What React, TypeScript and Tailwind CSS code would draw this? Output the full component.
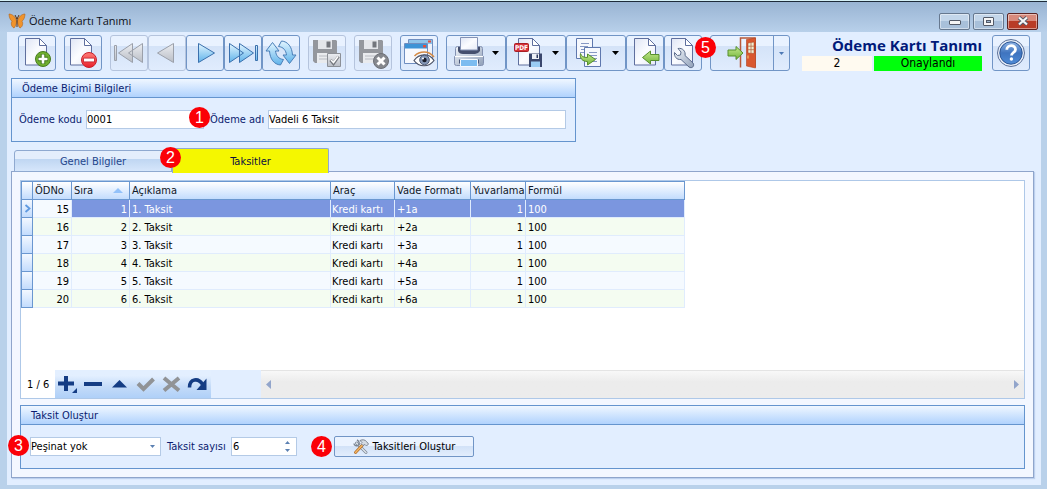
import { useState } from "react";
import type { ReactNode } from "react";
import clsx from "clsx";

type Row = {
  no: number;
  order: number;
  title: string;
  method: string;
  due: string;
  rounding: number;
  formula: string;
};

const rows: Row[] = [1, 2, 3, 4, 5, 6].map((n) => ({
  no: 14 + n,
  order: n,
  title: `${n}. Taksit`,
  method: "Kredi kartı",
  due: `+${n}a`,
  rounding: 1,
  formula: "100",
}));

const headCell =
  "h-[19px] overflow-hidden border-y border-r border-[#6a97d0] bg-linear-to-b from-white to-[#c3dcfd] px-0.5 text-left font-normal whitespace-nowrap text-[#101828]";

function Badge({ n, className }: { n: number; className: string }) {
  return (
    <span
      className={clsx(
        "absolute z-10 flex size-[21px] items-center justify-center rounded-full bg-[#fb0007] font-['Liberation_Sans',sans-serif] text-base leading-none text-white",
        className,
      )}
    >
      {n}
    </span>
  );
}

function Caret({ className }: { className: string }) {
  return (
    <svg viewBox="0 0 7 4" className={clsx("h-1 w-[7px] shrink-0", className)} fill="currentColor">
      <path d="M0 0h7L3.500 4z" />
    </svg>
  );
}

/* Shared gradients for the toolbar drawings */
function Defs() {
  return (
    <svg className="absolute size-0" aria-hidden="true">
      <defs>
        <linearGradient id="paper" x1="0" y1="0" x2="1" y2="1">
          <stop offset="0" stopColor="#dfe5f5" />
          <stop offset=".5" stopColor="#fbfcff" />
          <stop offset="1" stopColor="#e6eaf6" />
        </linearGradient>
        <linearGradient id="green" x1="0" y1="0" x2="0" y2="1">
          <stop offset="0" stopColor="#c4e88c" />
          <stop offset="1" stopColor="#72b53a" />
        </linearGradient>
        <linearGradient id="red" x1="0" y1="0" x2="0" y2="1">
          <stop offset="0" stopColor="#ff7d78" />
          <stop offset="1" stopColor="#e8202a" />
        </linearGradient>
        <linearGradient id="blue" x1="0" y1="0" x2="0" y2="1">
          <stop offset="0" stopColor="#e2f5ff" />
          <stop offset="1" stopColor="#5eb2ea" />
        </linearGradient>
        <linearGradient id="gray" x1="0" y1="0" x2="0" y2="1">
          <stop offset="0" stopColor="#eceef2" />
          <stop offset="1" stopColor="#b9bdc5" />
        </linearGradient>
        <linearGradient id="steel" x1="0" y1="0" x2="1" y2="1">
          <stop offset="0" stopColor="#f2f6fb" />
          <stop offset="1" stopColor="#8f9fb8" />
        </linearGradient>
        <linearGradient id="help" x1="0" y1="0" x2="0" y2="1">
          <stop offset="0" stopColor="#8fb4e6" />
          <stop offset=".5" stopColor="#3f74bf" />
          <stop offset="1" stopColor="#4e8bd6" />
        </linearGradient>
      </defs>
    </svg>
  );
}

function Icon({ children, wide }: { children: ReactNode; wide?: boolean }) {
  return (
    <svg
      viewBox={wide ? "0 0 40 34" : "0 0 36 34"}
      className={clsx("h-[34px] shrink-0", wide ? "w-10" : "w-9")}
      fill="none"
      aria-hidden="true"
    >
      {children}
    </svg>
  );
}

function Page({ x = 6 }: { x?: number }) {
  return (
    <g transform={`translate(${x} 2)`} stroke="#5f6f9e" strokeLinejoin="round">
      <path d="M.5.5h14l7 7v19.500h-21z" fill="url(#paper)" />
      <path d="M14.500.5v7h7z" fill="#fff" />
    </g>
  );
}

/* Greyed-out disk behind the save and cancel marks */
function Floppy() {
  return (
    <g>
      <path d="M4 4h23l1 1v22H6l-2-2z" fill="#94979d" />
      <path d="M9 4h14v9H9z" fill="#e4e6ea" />
      <path d="M17.500 5.500h4v6h-4z" fill="#73767c" />
      <path d="M8 17h16v10H8z" fill="#e9ebee" />
      <path d="M10 20h12M10 23h12" stroke="#b8bbc2" />
    </g>
  );
}

function GreenArrow({ d }: { d: string }) {
  return <path d={d} fill="url(#green)" stroke="#568f2c" strokeLinejoin="round" />;
}

type ToolProps = {
  label: string;
  disabled?: boolean;
  menu?: boolean;
  children: ReactNode;
};

function Tool({ label, disabled, menu, children }: ToolProps) {
  return (
    <button
      type="button"
      aria-label={label}
      disabled={disabled}
      className={clsx(
        "flex h-9 shrink-0 items-center rounded-[3px] border bg-linear-to-b from-[#e9f2ff] from-30% via-[#d4e3f8] via-30% to-[#e0ecfd]",
        menu ? "w-[60px]" : "w-[38px]",
        disabled ? "border-[#b5c4dd]" : "border-[#7195c6]",
      )}
    >
      {children}
      {menu && <Caret className="ml-[5px] text-black" />}
    </button>
  );
}

function TitleBar() {
  const btn =
    "flex h-[17px] w-[31px] items-center justify-center rounded-[2px] border shadow-[inset_0_0_0_1px_rgba(255,255,255,.45)]";
  return (
    <header className="flex h-[30px] items-center bg-linear-to-b from-[#99b4d3] to-[#b8d0ea] pt-2 pr-[9px] pl-2">
      <svg viewBox="0 0 18 16" className="h-4 w-[18px]" aria-hidden="true">
        <g fill="#f0932b" stroke="#b0651f" strokeWidth=".6">
          <path d="M8.500 8C7.500 3.500 4 1 1 1c.2 3 .8 5.500 3 7.200C2.500 10 3.500 14 6 15c1.500-1.500 2.500-4 2.500-7z" />
          <path d="M9.500 8C10.500 3.500 14 1 17 1c-.2 3-.8 5.500-3 7.200 1.500 1.800.5 5.800-2 6.800-1.500-1.500-2.500-4-2.500-7z" />
        </g>
        <path d="M9 5v9M7 2l2 4 2-4" stroke="#5a3416" fill="none" />
      </svg>
      <h1 className="ml-[3px] font-['Open_Sans','Noto_Sans',sans-serif] text-[11px] leading-4 text-[#0b0f16]">
        Ödeme Kartı Tanımı
      </h1>
      <div className="ml-auto flex gap-[3px]">
        <button type="button" aria-label="Küçült" className={clsx(btn, "border-[#66788f] bg-linear-to-b from-[#c3d6ea] from-50% to-[#a8c0da] to-50%")}>
          <svg viewBox="0 0 12 10" className="h-2.5 w-3">
            <rect x=".5" y="4.500" width="11" height="4" rx=".5" fill="#f5f5f5" stroke="#535a68" />
          </svg>
        </button>
        <button type="button" aria-label="Ekranı kapla" className={clsx(btn, "border-[#66788f] bg-linear-to-b from-[#c3d6ea] from-50% to-[#a8c0da] to-50%")}>
          <svg viewBox="0 0 11 9" className="h-[9px] w-[11px]">
            <rect x=".5" y=".5" width="10" height="8" rx=".5" fill="#f5f5f5" stroke="#535a68" />
            <rect x="3.500" y="3.500" width="4" height="2" fill="#9fb6cf" stroke="#535a68" />
          </svg>
        </button>
        <button type="button" aria-label="Kapat" className={clsx(btn, "border-[#5b2322] bg-linear-to-b from-[#d88a7c] from-50% to-[#b83c27] to-50%")}>
          <svg viewBox="0 0 12 10" className="h-2.5 w-3">
            <path d="M2 1.500l8 7m0-7l-8 7" stroke="#535a68" strokeWidth="4" />
            <path d="M2 1.500l8 7m0-7l-8 7" stroke="#f7f7f7" strokeWidth="2.200" />
          </svg>
        </button>
      </div>
    </header>
  );
}

function Toolbar() {
  return (
    <div className="flex items-start gap-2 pt-[3px] pr-[11px] pl-[11px]">
      <Tool label="Yeni">
        <Icon>
          <Page />
          <circle cx="24" cy="23" r="7.500" fill="#6fae2f" stroke="#477d1f" />
          <path d="M24 18v10M19 23h10" stroke="#3f7419" strokeWidth="4.500" />
          <path d="M24 18.500v9M19.500 23h9" stroke="#fff" strokeWidth="2.600" />
        </Icon>
      </Tool>
      <Tool label="Sil">
        <Icon>
          <Page x={5} />
          <circle cx="24" cy="24" r="7.500" fill="url(#red)" stroke="#c8202a" />
          <path d="M18.500 24h11" stroke="#b81722" strokeWidth="4.500" />
          <path d="M19 24h10" stroke="#fff" strokeWidth="3" />
        </Icon>
      </Tool>
      <div className="flex">
        <Tool label="İlk kayıt" disabled>
          <Icon>
            <g fill="url(#gray)" stroke="#9ba0aa" strokeLinejoin="round">
              <path d="M3.500 9.500h2v15h-2zM21.500 7.500v19l-14-9.500zM31.500 7.500v19l-14-9.500z" />
            </g>
          </Icon>
        </Tool>
        <Tool label="Önceki kayıt" disabled>
          <Icon>
            <path d="M24.500 7.500v19l-16-9.500z" fill="url(#gray)" stroke="#9ba0aa" strokeLinejoin="round" />
          </Icon>
        </Tool>
        <Tool label="Sonraki kayıt">
          <Icon>
            <path d="M11.500 7.500v19l16-9.500z" fill="url(#blue)" stroke="#3a70ad" strokeLinejoin="round" />
          </Icon>
        </Tool>
        <Tool label="Son kayıt">
          <Icon>
            <g fill="url(#blue)" stroke="#3a70ad" strokeLinejoin="round">
              <path d="M4.500 7.500v19l14-9.500zM14.500 7.500v19l14-9.500zM30.500 9.500h2v15h-2z" />
            </g>
          </Icon>
        </Tool>
        <Tool label="Yenile">
          <Icon>
            <g fill="url(#blue)" stroke="#4a7fb8" strokeLinejoin="round">
              <path d="M9.500 6.500l6.500 8.500h-3.500c.5 4.500 3 8 8 8.500l-3 5.500C11 28.500 7 23 6.500 15H3z" />
              <path d="M26.500 27.500L20 19h3.500c-.5-4.500-3-8-8-8.500l3-5.500C25 5.500 29 11 29.500 19H33z" />
            </g>
          </Icon>
        </Tool>
      </div>
      <Tool label="Kaydet" disabled>
        <Icon>
          <Floppy />
          <path d="M18.500 17.500h13v13h-13z" fill="url(#gray)" stroke="#8c9097" />
          <path d="M21.500 24l3 3.500 5-7" stroke="#75787e" strokeWidth="3" />
          <path d="M22 24l2.500 2.500 4.500-6" stroke="#fff" strokeWidth="1.500" />
        </Icon>
      </Tool>
      <Tool label="Vazgeç" disabled>
        <Icon>
          <Floppy />
          <circle cx="26" cy="25" r="7.500" fill="#85888e" stroke="#6d7077" />
          <path d="M22.500 21.500l7 7m0-7l-7 7" stroke="#fff" strokeWidth="3" />
        </Icon>
      </Tool>
      <Tool label="Görünüm">
        <Icon>
          <path d="M7.500 3.500h24v18h-24z" fill="#eef3fc" stroke="#6f8ec0" />
          <path d="M8 4h23v4H8z" fill="#8fc4ea" />
          <path d="M27 4.500h3v2h-3z" fill="#e2503e" />
          <path d="M3.500 7.500h23v20h-23z" fill="#f7f9fe" stroke="#6f8ec0" />
          <path d="M4 8h22v4.500H4z" fill="#3d93d6" />
          <path d="M22 9h3v2.500h-3z" fill="#e2503e" />
          <path d="M13 24.500c5-7 15-8 20 0-5 7-15 7-20 0z" fill="#fff" stroke="#4b5266" strokeWidth="1.200" />
          <path d="M13.500 20c5-5 14-6 19.500 1" stroke="#d58b45" strokeWidth="1.500" />
          <circle cx="23.500" cy="24" r="4.800" fill="#8296b6" stroke="#4d5b78" />
          <circle cx="23.500" cy="24" r="2.200" fill="#171c2a" />
          <circle cx="22" cy="22.500" r="1" fill="#fff" />
        </Icon>
      </Tool>
      <div className="relative flex">
        <Tool label="Yazdır" menu>
          <Icon wide>
            <path d="M8.500 12.500q0-2 2-2h23q2 0 2 2v7l1 1v7q0 2-2 2h-25q-2 0-2-2v-7l1-1z" fill="url(#steel)" stroke="#8492b2" />
            <path d="M11 11h22v4q-2 3-5 3H16q-4 0-5-3z" fill="#454f6d" />
            <path d="M13.500 1.500h17v12.500h-17z" fill="url(#paper)" stroke="#8492b4" />
            <path d="M8 20.500h28" stroke="#fff" />
            <path d="M12 23.500h20v4H12z" fill="#4a587a" />
            <path d="M13.500 23.500h17v7h-17z" fill="#7cbcf0" stroke="#f4f9ff" />
          </Icon>
        </Tool>
        <Tool label="PDF kaydet" menu>
          <Icon wide>
            <Page x={11} />
            <rect x="7.500" y="7.500" width="14" height="8" rx="1" fill="#d8343a" stroke="#a81e25" />
            <text x="14.500" y="14.200" textAnchor="middle" fontSize="6.500" fontWeight="700" fontFamily="DejaVu Sans Condensed, sans-serif" fill="#fff">
              PDF
            </text>
            <path d="M22 17.500h13V31H22z" fill="#3a476d" />
            <path d="M25 18h7v5h-7z" fill="#eef1f7" />
            <path d="M29.500 18.500h1.500V22h-1.500z" fill="#2e3b61" />
            <path d="M24 25.500h9V31h-9z" fill="#9accf4" />
          </Icon>
        </Tool>
        <Tool label="Kopyala" menu>
          <Icon wide>
            <path d="M9.500 2.500h16v20h-16z" fill="#f6f8fd" stroke="#5f78ae" />
            <path d="M14 7.500h8M13 10.500h8M14 13.500h8M13 16.500h8" stroke="#8698c4" />
            <path d="M17.500 11.500h16v19h-16z" fill="#f6f8fd" stroke="#5f78ae" />
            <path d="M22 16.500h8M21 19.500h9M22 22.500h8M21 25.500h9" stroke="#8698c4" />
            <GreenArrow d="M13.500 17.500c1 3 3 4 7 4v-3.500l8 5.500-8 5.500V25.500c-5 0-8-3-7-8z" />
          </Icon>
        </Tool>
        <Tool label="İçe aktar">
          <Icon>
            <Page x={7} />
            <GreenArrow d="M15.500 21.500l8-6.500v3.500h8.500v6h-8.500V28z" />
          </Icon>
        </Tool>
        <Tool label="Ayarlar">
          <Icon>
            <Page />
            <path
              d="M13 12.500l3 3.500-.5 3-3 .5-3-3c-.5 4 2 7.500 6.500 7l8 7.500c3 2 6-1 4-4l-8-7.500c1-4-2.500-8-7-7z"
              fill="url(#steel)"
              stroke="#5c6c8c"
              strokeLinejoin="round"
            />
          </Icon>
        </Tool>
        <Badge n={5} className="top-[2px] -right-[14px]" />
      </div>
      <div className="flex h-9 w-20 shrink-0 rounded-[3px] border border-[#7195c6] bg-linear-to-b from-[#e9f2ff] from-30% via-[#d4e3f8] via-30% to-[#e0ecfd]">
        <button type="button" aria-label="Çıkış" className="flex flex-1 justify-center border-r border-[#7195c6]">
          <svg viewBox="0 0 36 34" className="h-[34px] w-9" fill="none" aria-hidden="true">
            <path d="M16.500 31.500V2H31v29" stroke="#b8593a" strokeWidth="1.500" />
            <path d="M22.500 3.500l9-1.500v30l-9-2z" fill="#d9572f" stroke="#b03f1d" strokeWidth=".6" />
            <path d="M24 7l6-1v11.500l-6-.5z" fill="#f1eed2" stroke="#a33a1b" strokeWidth=".5" />
            <path d="M27 6.500V17M24 10.200h6M24 13.700h6" stroke="#b5694a" strokeWidth=".8" />
            <path d="M24 19.500v3" stroke="#f4d27a" />
            <GreenArrow d="M4 14h8v-3.500l7 6.500-7 6.500V20H4z" />
          </svg>
        </button>
        <button type="button" aria-label="Çıkış seçenekleri" className="flex w-[15px] items-center justify-center text-[#4d79b5]">
          <svg viewBox="0 0 5 3" className="h-[3px] w-[5px]" fill="currentColor">
            <path d="M0 0h5L2.500 3z" />
          </svg>
        </button>
      </div>
      <div className="ml-auto flex shrink-0 gap-2.5">
        <div className="w-[180px]">
          <h2 className="h-[18px] text-right font-['Open_Sans','Noto_Sans',sans-serif] text-[15px] leading-5 font-bold whitespace-nowrap text-[#001a7a]">
            Ödeme Kartı Tanımı
          </h2>
          <div className="mt-[3px] flex gap-0.5 text-center text-xs leading-[15px] text-black">
            <span className="h-[15px] w-[70px] bg-[#fffaf0]">2</span>
            <span className="h-[15px] flex-1 bg-[#00ff0c]">Onaylandı</span>
          </div>
        </div>
        <Tool label="Yardım">
          <Icon>
            <circle cx="18" cy="17" r="13.500" fill="#e8eef8" stroke="#5b7098" />
            <circle cx="18" cy="17" r="11.200" fill="url(#help)" stroke="#2d5796" />
            <path d="M13.800 13.800c0-5.500 8.700-5.500 8.700-.4 0 3-4 3.200-4 6" stroke="#fff" strokeWidth="2.800" />
            <circle cx="18.400" cy="23" r="1.700" fill="#fff" />
          </Icon>
        </Tool>
      </div>
    </div>
  );
}

function GroupBox({ title, className, children }: { title: string; className?: string; children: ReactNode }) {
  return (
    <section className={clsx("border border-[#6494ce] bg-[#e2eeff]", className)}>
      <h3 className="h-[19px] border-b border-[#6494ce] bg-linear-to-b from-[#f0f7ff] to-[#b0d2fd] pl-2.5 leading-5">{title}</h3>
      {children}
    </section>
  );
}

function InstallmentTable() {
  const [selected, setSelected] = useState(1);
  return (
    <table className="w-[664px] table-fixed border-separate border-spacing-0 text-black">
      <colgroup>
        <col className="w-3" />
        <col className="w-[39px]" />
        <col className="w-[58px]" />
        <col className="w-[201px]" />
        <col className="w-16" />
        <col className="w-[76px]" />
        <col className="w-[55px]" />
        <col className="w-[159px]" />
      </colgroup>
      <thead>
        <tr>
          <th className={clsx(headCell, "border-l")} aria-label="Seçim" />
          <th className={headCell}>ÖDNo</th>
          <th className={headCell}>
            <span className="flex items-center justify-between pr-1">
              Sıra
              <svg viewBox="0 0 10 5" className="h-[5px] w-2.5" fill="#93c2fa">
                <path d="M0 5h10L5 0z" />
              </svg>
            </span>
          </th>
          <th className={headCell}>Açıklama</th>
          <th className={headCell}>Araç</th>
          <th className={headCell}>Vade Formatı</th>
          <th className={headCell}>Yuvarlama</th>
          <th className={headCell}>Formül</th>
        </tr>
      </thead>
      <tbody>
        {rows.map((r) => {
          const active = r.order === selected;
          const stripe = r.order % 2 ? "bg-[#f5faff]" : "bg-[#f4fcf1]";
          const base = "h-[18px] border-r border-b border-[#e0ecfd] pt-0.5 whitespace-nowrap";
          const cell = clsx(base, active ? "bg-[#7b96df] text-white" : stripe);
          return (
            <tr key={r.no} onClick={() => setSelected(r.order)}>
              <td className="h-[18px] border-x border-b border-[#6a97d0] bg-linear-to-b from-[#f3f8ff] to-[#c3dcfd]">
                {active && (
                  <svg viewBox="0 0 7 9" className="mx-auto h-[9px] w-[7px]" fill="none">
                    <path d="M1.500 1l4 3.500-4 3.500" stroke="#5f9ae0" strokeWidth="1.800" />
                  </svg>
                )}
              </td>
              <td className={clsx(base, stripe, "pr-0.5 text-right")}>{r.no}</td>
              <td className={clsx(cell, "pr-0.5 text-right")}>{r.order}</td>
              <td className={clsx(cell, "pl-0.5")}>{r.title}</td>
              <td className={clsx(cell, "pl-px")}>{r.method}</td>
              <td className={clsx(cell, "pl-0.5")}>{r.due}</td>
              <td className={clsx(cell, "pr-0.5 text-right")}>{r.rounding}</td>
              <td className={clsx(cell, "pl-0.5")}>{r.formula}</td>
            </tr>
          );
        })}
      </tbody>
    </table>
  );
}

const navItems = [
  {
    label: "Ekle",
    draw: (
      <>
        <path d="M1 9.500h16M9 2v15" stroke="#153d84" strokeWidth="4" />
        <path d="M20 14v5h-5z" fill="#153d84" />
      </>
    ),
  },
  { label: "Çıkar", draw: <path d="M1 10h18" stroke="#153d84" strokeWidth="4" /> },
  { label: "Düzenle", draw: <path d="M3 13.500L10.500 6l7.500 7.500z" fill="#153d84" /> },
  { label: "Onayla", draw: <path d="M3 9.500l5.500 5.500L18.500 5" stroke="#919396" strokeWidth="4" /> },
  { label: "İptal", draw: <path d="M3 4l15 12.500M18 4L3 16.500" stroke="#919396" strokeWidth="4" /> },
  {
    label: "Yenile",
    draw: (
      <>
        <path d="M2.500 13.500c0-9 9-10 13-3" stroke="#153d84" strokeWidth="3.500" />
        <path d="M19.500 4.500v11.500h-10z" fill="#153d84" />
      </>
    ),
  },
];

function Navigator() {
  return (
    <div className="flex h-7 items-stretch">
      <span className="w-[34px] pl-1.5 leading-[30px] text-black">1 / 6</span>
      <div className="flex bg-linear-to-b from-[#e3efff] from-20% via-[#c4dbf8] via-60% to-[#afd0f8]">
        {navItems.map((item) => (
          <button key={item.label} type="button" aria-label={item.label} className="flex w-[26px] items-center justify-center">
            <svg viewBox="0 0 22 21" className="h-[21px] w-[22px]" fill="none">
              {item.draw}
            </svg>
          </button>
        ))}
      </div>
      <div className="w-[50px] bg-[#e2eeff]" />
      <div className="flex flex-1 items-center justify-between border-t border-[#e4e4e4] bg-linear-to-b from-[#f8f8f8] to-[#ececec] to-40% px-[5px] text-[#92a5cb]">
        <button type="button" aria-label="Sola kaydır">
          <svg viewBox="0 0 5 9" className="h-[9px] w-[5px]" fill="currentColor">
            <path d="M5 0v9L0 4.500z" />
          </svg>
        </button>
        <button type="button" aria-label="Sağa kaydır">
          <svg viewBox="0 0 5 9" className="h-[9px] w-[5px]" fill="currentColor">
            <path d="M0 0v9l5-4.500z" />
          </svg>
        </button>
      </div>
    </div>
  );
}

function CreateForm() {
  const [count, setCount] = useState(6);
  return (
    <form className="flex h-[43px] items-center pl-[9px]" onSubmit={(e) => e.preventDefault()}>
      <div className="relative flex items-center">
        <Badge n={3} className="-top-0.5 -left-[22px]" />
        <select
          aria-label="Peşinat"
          className="h-[19px] w-[131px] appearance-none border border-[#b4cae6] bg-white text-black"
        >
          <option>Peşinat yok</option>
        </select>
        <svg viewBox="0 0 5 3" className="pointer-events-none absolute right-1.5 h-[3px] w-[5px]" fill="#5b80b2">
          <path d="M0 0h5L2.500 3z" />
        </svg>
      </div>
      <label htmlFor="count" className="ml-1.5 w-16 whitespace-nowrap">
        Taksit sayısı
      </label>
      <div className="flex h-[19px] w-[66px] border border-[#b4cae6] bg-white">
        <input
          id="count"
          inputMode="numeric"
          value={count}
          onChange={(e) => setCount(Number(e.target.value) || 0)}
          className="min-w-0 flex-1 pl-px text-black outline-none"
        />
        <div className="flex w-[18px] flex-col items-center justify-center gap-[5px]">
          <button type="button" aria-label="Artır" onClick={() => setCount(count + 1)}>
            <svg viewBox="0 0 5 3" className="h-[3px] w-[5px]" fill="#5b80b2">
              <path d="M0 3h5L2.500 0z" />
            </svg>
          </button>
          <button type="button" aria-label="Azalt" onClick={() => setCount(Math.max(0, count - 1))}>
            <svg viewBox="0 0 5 3" className="h-[3px] w-[5px]" fill="#5b80b2">
              <path d="M0 0h5L2.500 3z" />
            </svg>
          </button>
        </div>
      </div>
      <div className="relative ml-[37px]">
        <Badge n={4} className="top-0 -left-[23px]" />
        <button
          type="submit"
          className="flex h-[21px] w-[140px] items-center justify-center gap-1 rounded-[2px] border border-[#7195c6] bg-linear-to-b from-[#ebf3ff] from-45% via-[#d1e1f7] via-45% to-[#e2edfd] whitespace-nowrap text-black"
        >
          <svg viewBox="0 0 16 15" className="h-[15px] w-4" fill="none" aria-hidden="true">
            <path d="M3.500 4l9.500 9.500" stroke="#7a8492" strokeWidth="2.800" strokeLinecap="round" />
            <path d="M3.500 4l9.500 9.500" stroke="#dfe5ec" strokeWidth="1.400" strokeLinecap="round" />
            <path d="M1 4.500c0 2 3 3 4.500 1.500S6 2 4 1" stroke="#7a8492" strokeWidth="1.400" />
            <path d="M9.500 6l-7 7.500" stroke="#b06a25" strokeWidth="2.800" strokeLinecap="round" />
            <path d="M9.500 6l-7 7.500" stroke="#f5b765" strokeWidth="1.400" strokeLinecap="round" />
            <path d="M7 1.500c2.500-1.200 5-.8 6.500 1l2 2.500-2 2-1.500-1.500-2 1-2-2 1-1z" fill="#d5dbe3" stroke="#7a8492" />
          </svg>
          Taksitleri Oluştur
        </button>
      </div>
    </form>
  );
}

export default function App() {
  return (
    <div className="flex min-h-screen flex-col border-t border-[#d5f0f6] bg-[#b9d1ea] font-['DejaVu_Sans_Condensed','Noto_Sans',sans-serif] text-[11px] leading-[14px] text-[#0a1c70]">
      <Defs />
      <div className="h-px bg-[#1d2b3a]" />
      <TitleBar />
      <main className="mr-1.5 mb-1 ml-[7px] flex flex-1 flex-col bg-[#e2eeff]">
        <Toolbar />
        <div className="flex flex-1 flex-col pt-[7px] pr-[7px] pb-[7px] pl-1">
          <GroupBox title="Ödeme Biçimi Bilgileri" className="w-[565px]">
            <div className="flex h-[43px] items-center pr-[9px] pl-[7px]">
              <label htmlFor="code" className="w-[67px] whitespace-nowrap">
                Ödeme kodu
              </label>
              <div className="relative">
                <input id="code" defaultValue="0001" className="h-[19px] w-[118px] border border-[#b4cae6] bg-white text-black" />
                <Badge n={1} className="-top-[3px] right-[-6px]" />
              </div>
              <label htmlFor="name" className="ml-1.5 w-[58px] whitespace-nowrap">
                Ödeme adı
              </label>
              <input
                id="name"
                defaultValue="Vadeli 6 Taksit"
                className="h-[19px] min-w-0 flex-1 border border-[#b4cae6] bg-white text-black"
              />
            </div>
          </GroupBox>
          <div role="tablist" className="relative z-10 mt-1.5 -mb-0.5 flex items-end pl-[3px]">
            <button
              type="button"
              role="tab"
              aria-selected="false"
              className="mb-px h-[22px] w-[158px] rounded-t-[3px] border border-[#8fa9d0] bg-linear-to-b from-[#e4eefc] from-40% via-[#bfd6f2] via-40% to-[#d6e6fb] pt-0.5 text-[#24468c]"
            >
              Genel Bilgiler
            </button>
            <div className="relative">
              <Badge n={2} className="-top-px -left-3" />
              <button
                type="button"
                role="tab"
                aria-selected="true"
                className="block h-[25px] w-[157px] rounded-t-[2px] border-x border-t border-[#8fa9d0] bg-[#f5f700] pt-0.5 text-[#0a1040]"
              >
                Taksitler
              </button>
            </div>
          </div>
          <div className="flex flex-1 flex-col border border-[#8fa5cb] bg-[#f3f7ff] px-2 pt-2 pb-2 shadow-[1px_1px_1px_#bcd0ee]">
            <div className="flex flex-1 flex-col justify-between border border-[#aec8e8] bg-white">
              <InstallmentTable />
              <Navigator />
            </div>
            <GroupBox title="Taksit Oluştur" className="mt-1.5">
              <CreateForm />
            </GroupBox>
          </div>
        </div>
      </main>
    </div>
  );
}
